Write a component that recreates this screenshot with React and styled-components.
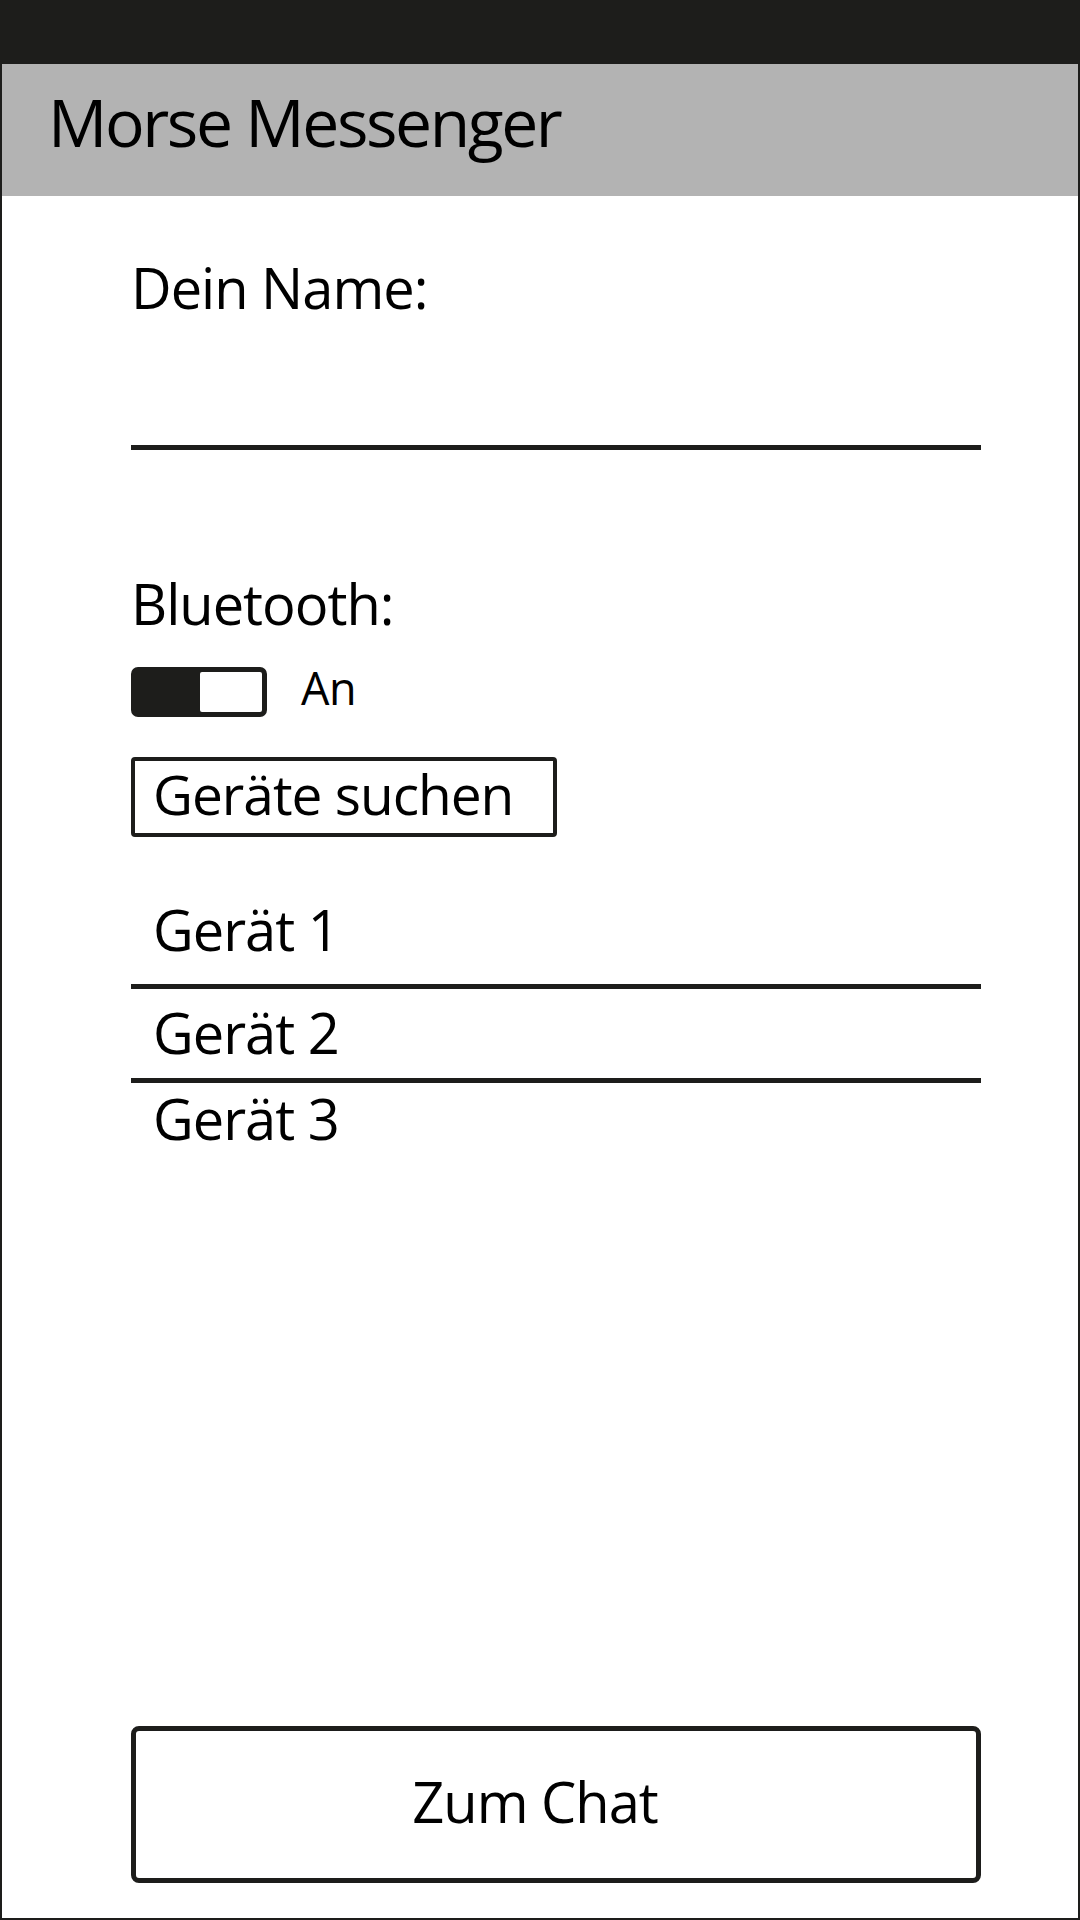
import React from "react";
import styled, { createGlobalStyle } from "styled-components";

const Global = createGlobalStyle`
  html, body { margin: 0; padding: 0; background: #ffffff; }
  body { font-family: "Open Sans", "Noto Sans", sans-serif; color: #000; }
  * { box-sizing: border-box; }
`;

const Page = styled.div`
  width: 1080px;
  height: 1920px;
  display: flex;
  flex-direction: column;
`;

const StatusBar = styled.div`
  height: 64px;
  background: #1d1d1b;
  flex-shrink: 0;
`;

const Screen = styled.div`
  flex: 1;
  display: flex;
  flex-direction: column;
  border: 2px solid #1d1d1b;
  border-top: none;
`;

const AppBar = styled.header`
  height: 132px;
  background: #b3b3b3;
  padding: 24px 0 0 46px;
  flex-shrink: 0;
`;

const Title = styled.h1`
  margin: 0;
  font-size: 66px;
  line-height: 1;
  font-weight: 400;
  letter-spacing: -2.4px;
`;

const Content = styled.main`
  flex: 1;
  display: flex;
  flex-direction: column;
  padding: 63px 97px 35px 129px;
`;

const Label = styled.label`
  display: block;
  font-size: ${(p) => p.$size || 56}px;
  line-height: 1;
  margin-top: ${(p) => p.$top || 0}px;
  letter-spacing: -1px;
`;

const NameInput = styled.input`
  display: block;
  width: 100%;
  height: 135px;
  border: none;
  border-bottom: 5px solid #1d1d1b;
  outline: none;
  background: transparent;
  font: inherit;
  font-size: 48px;
  padding: 0 4px;
`;

const ToggleRow = styled.div`
  display: flex;
  align-items: flex-start;
  gap: 34px;
  margin-top: 36px;
`;

const Track = styled.div`
  width: 136px;
  height: 50px;
  border: 5px solid #1d1d1b;
  border-radius: 7px;
  background: #1d1d1b;
  display: flex;
  justify-content: flex-end;
`;

const Knob = styled.div`
  width: 62px;
  height: 100%;
  background: #ffffff;
  border-radius: 2px;
`;

const ToggleText = styled.span`
  font-size: 45px;
  line-height: 1;
  margin-top: -2px;
  letter-spacing: -0.5px;
`;

const SearchButton = styled.button`
  margin-top: 40px;
  width: 426px;
  height: 80px;
  border: 4px solid #1d1d1b;
  border-radius: 4px;
  background: #fff;
  font-family: inherit;
  font-size: 55px;
  line-height: 1;
  color: #000;
  text-align: left;
  padding: 0 0 7px 18px;
  letter-spacing: -1px;
`;

const DeviceList = styled.ul`
  list-style: none;
  margin: 49px 0 0;
  padding: 0;
`;

const DeviceRow = styled.li`
  font-size: 56px;
  line-height: 1;
  padding: 15px 20px 18px 22px;
  border-bottom: 5px solid #1d1d1b;
  letter-spacing: -1px;

  &:first-child {
    padding-top: 15px;
    padding-bottom: 27px;
  }
  &:last-child {
    border-bottom: none;
    padding-top: 7px;
  }
`;

const ChatButton = styled.button`
  margin-top: auto;
  width: 100%;
  height: 157px;
  border: 5px solid #1d1d1b;
  border-radius: 8px;
  background: #fff;
  font-family: inherit;
  font-size: 56px;
  line-height: 1;
  color: #000;
  padding: 0 42px 8px 0;
  letter-spacing: -1px;
`;

const devices = ["Gerät 1", "Gerät 2", "Gerät 3"];

export default function App() {
  return (
    <>
      <Global />
      <Page>
        <StatusBar />
        <Screen>
          <AppBar>
            <Title>Morse Messenger</Title>
          </AppBar>
          <Content>
            <Label htmlFor="name">Dein Name:</Label>
            <NameInput id="name" type="text" />
            <Label $top={125}>Bluetooth:</Label>
            <ToggleRow>
              <Track>
                <Knob />
              </Track>
              <ToggleText>An</ToggleText>
            </ToggleRow>
            <div>
              <SearchButton>Geräte suchen</SearchButton>
            </div>
            <DeviceList>
              {devices.map((d) => (
                <DeviceRow key={d}>{d}</DeviceRow>
              ))}
            </DeviceList>
            <ChatButton>Zum Chat</ChatButton>
          </Content>
        </Screen>
      </Page>
    </>
  );
}
